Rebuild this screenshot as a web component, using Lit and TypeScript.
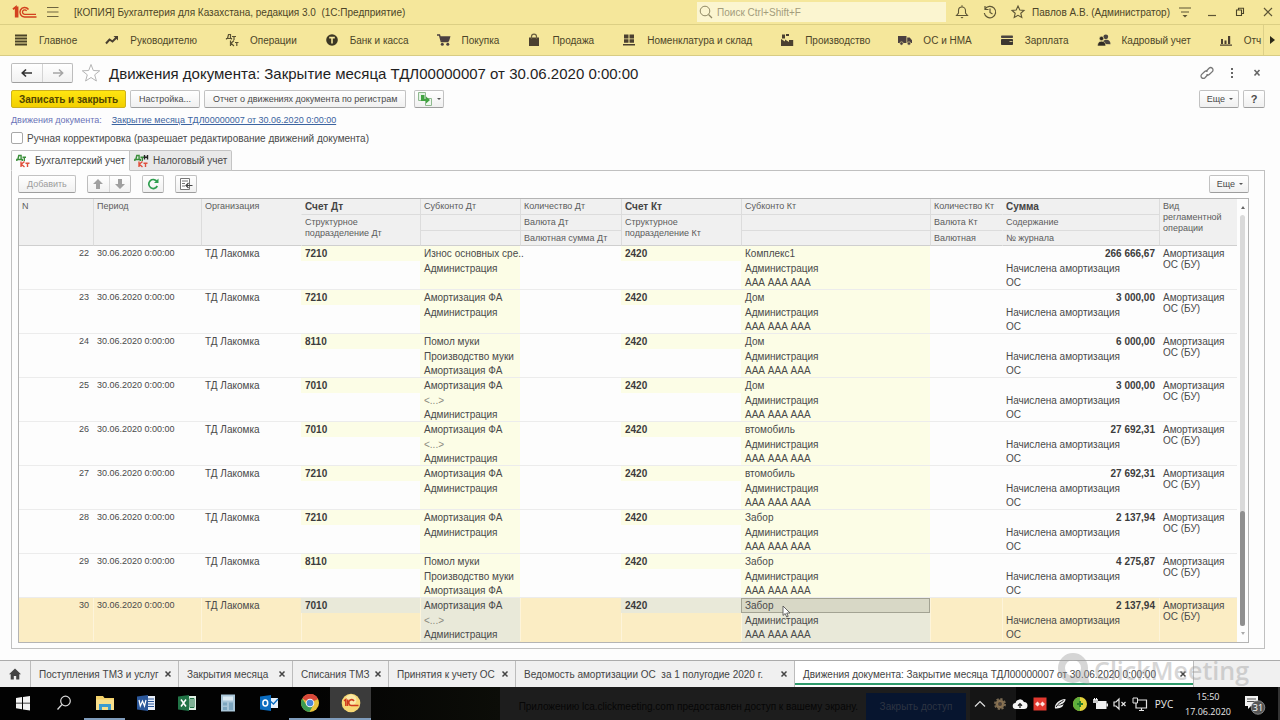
import { LitElement, html, svg, css, nothing } from "lit";
import { customElement, property } from "lit/decorators.js";
import { classMap } from "lit/directives/class-map.js";

interface Entry {
  n: number;
  debit: string;
  debitSub: [string, string, string];
  creditSub: string;
  sum: string;
}

const ADM = "Администрация";
const FA = "Амортизация ФА";

const entries: Entry[] = [
  { n: 22, debit: "7210", debitSub: ["Износ основных сре..", ADM, ""], creditSub: "Комплекс1", sum: "266 666,67" },
  { n: 23, debit: "7210", debitSub: [FA, ADM, ""], creditSub: "Дом", sum: "3 000,00" },
  { n: 24, debit: "8110", debitSub: ["Помол муки", "Производство муки", FA], creditSub: "Дом", sum: "6 000,00" },
  { n: 25, debit: "7010", debitSub: [FA, "<...>", ADM], creditSub: "Дом", sum: "3 000,00" },
  { n: 26, debit: "7010", debitSub: [FA, "<...>", ADM], creditSub: "втомобиль", sum: "27 692,31" },
  { n: 27, debit: "7210", debitSub: [FA, ADM, ""], creditSub: "втомобиль", sum: "27 692,31" },
  { n: 28, debit: "7210", debitSub: [FA, ADM, ""], creditSub: "Забор", sum: "2 137,94" },
  { n: 29, debit: "8110", debitSub: ["Помол муки", "Производство муки", FA], creditSub: "Забор", sum: "4 275,87" },
  { n: 30, debit: "7010", debitSub: [FA, "<...>", ADM], creditSub: "Забор", sum: "2 137,94" },
];

const glyphs: Record<string, unknown> = {
  main: svg`<path d="M1 2.500h12M1 5.500h12M1 8.500h12M1 11.500h12" stroke="#4a4326" stroke-width="1.800"/>`,
  trend: svg`<path d="M1 10.500 4.500 6.500 7.500 8.500 11.500 4.500" fill="none" stroke="#4a4030" stroke-width="2"/><path d="M8.500 3H13v4.500z" fill="#4a4030"/>`,
  ops: svg`<g fill="none" stroke="#5a5232" stroke-width="1.200"><path d="M1.500 6.500V5.500h5v1M2.500 5.500 3.500 1.500h2v4M7 3.500h4M9 3.500v3.500"/><path d="M5.500 7.500v5.500M9 7.500 6 10.300 9 13M10 9.500h3.500M11.800 9.500V13"/></g>`,
  bank: svg`<circle cx="7" cy="7" r="5.800" fill="#3c3724"/><path d="M4.200 4.600h5.600M7 4.600V10.500" stroke="#f5e79b" stroke-width="1.600"/>`,
  cart: svg`<path d="M0 2h2.500l1.800 6.500h7.200" fill="none" stroke="#4b4040" stroke-width="1.400"/><path d="M3 3.200h10.500L12 8.200H4.500z" fill="#4b4040"/><circle cx="5.300" cy="11.300" r="1.500" fill="#4b4040"/><circle cx="10.800" cy="11.300" r="1.500" fill="#4b4040"/>`,
  bag: svg`<path d="M2 4.500h10V13H2z" fill="#4b4030"/><path d="M4.500 6V3.500a2.500 2.300 0 0 1 5 0V6" fill="none" stroke="#6b6040" stroke-width="1.200"/>`,
  stock: svg`<path d="M2 1.500h4.500v4H2zM7.500 1.500H12v4H7.500zM2 6.300h4.500v3.500H2zM7.500 6.300H12v3.500H7.500zM1 11h12v1.500H1z" fill="#4b4030"/>`,
  factory: svg`<path d="M1 13V6l4 2.500V6.500l4 2.500V7h4.200v6zM2 1.500h3v4H2zM6 1h3v2H6z" fill="#4b4030"/>`,
  truck: svg`<path d="M0 3h8.500v7H0zM9.200 4.500h2.500L14 7.200V10H9.200z" fill="#4b4040"/><circle cx="3.500" cy="10.500" r="1.700" fill="#4b4040" stroke="#f5e79b" stroke-width=".6"/><circle cx="11" cy="10.500" r="1.700" fill="#4b4040" stroke="#f5e79b" stroke-width=".6"/>`,
  card: svg`<rect x="1" y="2.500" width="12" height="2.500" rx=".8" fill="#4b4540"/><rect x="1" y="6" width="12" height="6" rx=".8" fill="#3c3730"/><path d="M9.500 8.500h3" stroke="#c9bd84" stroke-width="1"/>`,
  people: svg`<circle cx="8.800" cy="3.800" r="2.400" fill="#4b4540"/><path d="M5.500 11c0-3 1.500-4.300 4-4.300s4 1.600 4 4.600z" fill="#4b4540"/><circle cx="4.500" cy="5.500" r="2.200" fill="#2f2a24" stroke="#f5e79b" stroke-width=".6"/><path d="M.5 13c0-3.300 1.500-4.800 4-4.800s4.300 1.500 4.300 4.800z" fill="#2f2a24" stroke="#f5e79b" stroke-width=".6"/>`,
  chart: svg`<path d="M2 6h2v5H2zM5.500 7.500h2V11h-2zM9 3h2.200v8H9zM1 11.500h12v1.200H1z" fill="#4b4030"/>`,
};

const sections: [string, string][] = [
  ["main", "Главное"],
  ["trend", "Руководителю"],
  ["ops", "Операции"],
  ["bank", "Банк и касса"],
  ["cart", "Покупка"],
  ["bag", "Продажа"],
  ["stock", "Номенклатура и склад"],
  ["factory", "Производство"],
  ["truck", "ОС и НМА"],
  ["card", "Зарплата"],
  ["people", "Кадровый учет"],
  ["chart", "Отч"],
];

const windows = [
  "Поступления ТМЗ и услуг",
  "Закрытия месяца",
  "Списания ТМЗ",
  "Принятия к учету ОС",
  "Ведомость амортизации ОС\u00a0 за 1 полугодие 2020 г.",
  "Движения документа: Закрытие месяца ТДЛ00000007 от 30.06.2020 0:00:00",
];

const icon = (size: number, body: unknown) =>
  html`<svg width=${size} height=${size} viewBox="0 0 ${size} ${size}" aria-hidden="true">${body}</svg>`;

@customElement("app-header")
class AppHeader extends LitElement {
  static styles = css`
    :host { display: block; background: #f5e79b; color: #4c4528; }
    svg { display: block; flex: none; }
    button { font: inherit; color: inherit; background: none; border: 0; padding: 0; display: flex; align-items: center; }
    .title { display: flex; align-items: center; height: 24px; border-bottom: 1px solid #dccf84; padding: 0 4px 0 12px; }
    .menu { margin: 0 14px 0 9px; }
    .name { flex: 1; white-space: pre; }
    .search { display: flex; align-items: center; width: 249px; height: 20px; background: #fbf5d0; gap: 4px; padding: 0 2px; box-sizing: border-box; margin-right: 8px; }
    .search input { flex: 1; min-width: 0; border: 0; background: none; font: inherit; padding: 0; outline: 0; }
    .search input::placeholder { color: #a39c7c; opacity: 1; }
    .tools { display: flex; align-items: center; gap: 12px; }
    .tools .user { margin: 0 -4px 0 -6px; }
    .nav { display: flex; height: 30px; border-bottom: 1px solid #d8cc84; }
    .list { display: flex; flex: 1; min-width: 0; overflow: hidden; padding-left: 14px; gap: 28px; }
    .item { flex: none; gap: 11px; white-space: nowrap; }
    .more { flex: none; width: 17px; border-left: 1px solid #ddd088; padding-left: 5px; }
  `;
  render() {
    return html`
      <div class="title">
        ${html`<svg width="25" height="14" viewBox="0 0 25 14" aria-label="1C"><g fill="none" stroke="#d2421f"><path d="M1 4.200 3.800 2v10.500M5.500 1.500v11" stroke-width="1.900"/><path d="M16.500 4.500A4.700 4.700 0 1 0 12.500 11.900H24.500" stroke-width="1.500"/><path d="M14.600 6a2.200 2.200 0 1 0-2 3.300H24" stroke-width="1.300"/></g></svg>`}
        <button class="menu" aria-label="Меню">${icon(14, svg`<path d="M1 2.500h11.500M1 7h11.500M1 11.500h11.500" stroke="#6e6540" stroke-width="1.100"/>`)}</button>
        <span class="name">[КОПИЯ] Бухгалтерия для Казахстана, редакция 3.0  (1С:Предприятие)</span>
        <label class="search">
          ${icon(14, svg`<circle cx="6" cy="6" r="4.800" fill="none" stroke="#8f8864"/><path d="m9.500 9.500 3.500 3.500" stroke="#8f8864" stroke-width="1.300"/>`)}
          <input placeholder="Поиск Ctrl+Shift+F" aria-label="Поиск" />
        </label>
        <div class="tools">
          <button aria-label="Уведомления">${icon(16, svg`<path d="M2.500 11.500h11L11.500 9V6.500a3.500 3.500 0 0 0-7 0V9zM8 1.200V3" fill="none" stroke="#5d5535" stroke-width="1.100"/><path d="M6.500 13h3L8 14.500z" fill="#5d5535"/>`)}</button>
          <button aria-label="История">${icon(16, svg`<path d="M3 5.200A5.700 5.700 0 1 1 2.300 9M3 2v3.500h3.500M8 4.500V8.500l2.500 1.500" fill="none" stroke="#5d5535" stroke-width="1.200"/>`)}</button>
          <button aria-label="Избранное">${icon(16, svg`<path d="m8 2 1.800 4 4.200.4-3.200 2.900 1 4.200L8 11.300l-3.800 2.200 1-4.200L2 6.400 6.200 6z" fill="none" stroke="#5d5535" stroke-width="1.100"/>`)}</button>
          <span class="user">Павлов А.В. (Администратор)</span>
          <button aria-label="Сервис">${icon(14, svg`<path d="M1 3h12M3 7h8" stroke="#5d5535" stroke-width="1.100"/><path d="M4.500 10h5L7 12.500z" fill="#5d5535"/>`)}</button>
          <button aria-label="Свернуть">${icon(16, svg`<path d="M4 11.500h8" stroke="#5d5535" stroke-width="1.200"/>`)}</button>
          <button aria-label="Развернуть">${icon(16, svg`<path d="M4.500 6h5v5.500h-5zM6.500 6V4.200h5v5.300H9.800" fill="none" stroke="#4b4428" stroke-width="1.100"/>`)}</button>
          <button aria-label="Закрыть">${icon(16, svg`<path d="m4 4 8 8M12 4l-8 8" stroke="#5d5535" stroke-width="1.200"/>`)}</button>
        </div>
      </div>
      <nav class="nav">
        <div class="list">
          ${sections.map(([g, label]) => html`<button class="item">${icon(14, glyphs[g])}${label}</button>`)}
        </div>
        <button class="more" aria-label="Дальше">${icon(8, svg`<path d="M1 0v8l5-4z" fill="#2c2818"/>`)}</button>
      </nav>
    `;
  }
}

@customElement("entries-table")
class EntriesTable extends LitElement {
  @property({ attribute: false }) rows: Entry[] = [];
  static styles = css`
    :host { display: flex; border: 1px solid #b4b4b4; background: #fdfdfd; min-height: 0; overflow: hidden; }
    .view { flex: 1; min-width: 0; }
    table { width: 100%; border-collapse: separate; border-spacing: 0; table-layout: fixed; color: #4a4a4a; }
    th, td { padding: 0; text-align: left; vertical-align: top; font-weight: 400; white-space: nowrap; }
    th { background: #f0f0f0; padding: 2px 0 0 3px; font-size: 9px; line-height: 11px; border-left: 1px solid #dcdcdc; box-sizing: border-box; color: #5c5c5c; border-bottom: 1px solid #dcdcdc; }
    th.first { border-left: 0; }
    th.flat { border-left-color: transparent; }
    th.key { font-weight: 700; font-size: 10px; color: #444; }
    tr.h { height: 16px; }
    tr.h3 { height: 15px; }
    tr.h .low, tr.h3 th { border-bottom-color: #cfcfcf; }
    td { border-bottom: 1px solid #ececec; height: 43px; }
    .line { display: block; box-sizing: border-box; height: 15px; line-height: 15px; padding: 0 4px; }
    .line.last { height: 13px; line-height: 13px; }
    .tint, .account .line { background: #fcfde6; }
    .num { text-align: right; }
    .small { font-size: 9px; }
    .strong { font-weight: 700; color: #3c3c3c; }
    .kind .line { line-height: 11px; height: 33px; padding-top: 2px; }
    .muted { color: #8b8b80; }
    .current td { background: #fbedc4; border-color: #fbedc4; }
    .current td + td { box-shadow: inset 1px 0 #fdf4da; }
    .current td.tint, .current .account .line { background: #e9e9d9; }
    .current td.tint { border-color: #e9e9d9; }
    .current .line.active { background: #d8d8c6; box-shadow: inset 0 0 0 1px #a3a393; }
    .anchor { position: relative; }
    .pointer { position: absolute; left: 41px; top: 7px; z-index: 2; }
    .bar { flex: none; width: 11px; display: flex; flex-direction: column; align-items: center; padding: 7px 0; box-sizing: border-box; gap: 6px; }
    .arrow { border: 2px solid transparent; border-top: 0; border-bottom: 3px solid #666; }
    .arrow.down { border-top: 3px solid #aaa; border-bottom: 0; }
    .track { flex: 1; width: 5px; border-radius: 3px; background: #dadada; display: flex; flex-direction: column; justify-content: flex-end; }
    .thumb { height: 28%; border-radius: 3px; background: #8f8f8f; }
    .c-n { width: 74px; } .c-date { width: 108px; } .c-org { width: 100px; } .c-acc { width: 119px; }
    .c-sub { width: 100px; } .c-qty { width: 101px; } .c-acc2 { width: 120px; } .c-sub2 { width: 189px; }
    .c-qty2 { width: 72px; } .c-sum { width: 157px; } .c-kind { width: 78px; }
  `;
  private lines(parts: string[], last = -1) {
    return parts.map(
      (p, i) => html`<span class=${classMap({ line: true, last: i === 2, muted: p === "<...>", active: i === last })}>${p}</span>`
    );
  }
  render() {
    const cols = ["n", "date", "org", "acc", "sub", "qty", "acc2", "sub2", "qty2", "sum", "kind"];
    return html`
      <div class="view">
      <table>
        <colgroup>${cols.map((c) => html`<col class="c-${c}" />`)}</colgroup>
        <thead>
          <tr class="h">
            <th class="first low" rowspan="3">N</th>
            <th class="low" rowspan="3">Период</th>
            <th class="low" rowspan="3">Организация</th>
            <th class="flat key">Счет Дт</th>
            <th>Субконто Дт</th>
            <th>Количество Дт</th>
            <th class="key">Счет Кт</th>
            <th>Субконто Кт</th>
            <th>Количество Кт</th>
            <th class="flat key">Сумма</th>
            <th class="low" rowspan="3">Вид<br />регламентной<br />операции</th>
          </tr>
          <tr class="h">
            <th class="flat low" rowspan="2">Структурное<br />подразделение Дт</th>
            <th></th>
            <th>Валюта Дт</th>
            <th class="low" rowspan="2">Структурное<br />подразделение Кт</th>
            <th></th>
            <th>Валюта Кт</th>
            <th class="flat">Содержание</th>
          </tr>
          <tr class="h3">
            <th></th>
            <th>Валютная сумма Дт</th>
            <th></th>
            <th>Валютная</th>
            <th class="flat">№ журнала</th>
          </tr>
        </thead>
        <tbody>
          ${this.rows.map((r) => {
            const current = r.n === 30;
            return html`<tr class=${classMap({ current })}>
              <td class="num small"><span class="line">${r.n}</span></td>
              <td class="small"><span class="line">30.06.2020 0:00:00</span></td>
              <td><span class="line">ТД Лакомка</span></td>
              <td class="account strong"><span class="line">${r.debit}</span></td>
              <td class="tint">${this.lines(r.debitSub)}</td>
              <td></td>
              <td class="account strong"><span class="line">2420</span></td>
              <td class="tint anchor">
                ${this.lines([r.creditSub, ADM, "ААА ААА ААА"], current ? 0 : -1)}
                ${current
                  ? html`<svg class="pointer" width="9" height="13" viewBox="0 0 9 13" aria-hidden="true"><path d="M1 1v9.500l2.200-2 1.500 3.500 1.500-.7-1.500-3.300H8z" fill="#fff" stroke="#555" stroke-width=".9"/></svg>`
                  : nothing}
              </td>
              <td></td>
              <td>
                <span class="line num strong">${r.sum}</span>
                <span class="line">Начислена амортизация</span>
                <span class="line last">ОС</span>
              </td>
              <td class="kind"><span class="line">Амортизация<br />ОС (БУ)</span></td>
            </tr>`;
          })}
        </tbody>
      </table>
      </div>
      <div class="bar"><i class="arrow"></i><div class="track"><div class="thumb"></div></div><i class="arrow down"></i></div>
    `;
  }
}

@customElement("task-bar")
class TaskBar extends LitElement {
  static styles = css`
    :host { display: flex; height: 34px; background: #040404; color: #e8e8e8; overflow: hidden; font-family: "Open Sans", "Noto Sans", sans-serif; }
    button { font: inherit; color: inherit; background: none; border: 0; padding: 0; }
    svg { display: block; }
    .apps { display: flex; padding-left: 2px; flex: none; width: 498px; background: linear-gradient(90deg, #020202 60%, #0c0d08); }
    .app { flex: none; width: 41px; display: flex; align-items: center; justify-content: center; border-bottom: 3px solid transparent; padding-top: 1px; box-sizing: border-box; }
    .run { border-bottom-color: #7f9cbc; }
    .on { background: #3b3b3b; }
    .share { flex: 1; display: flex; align-items: center; justify-content: flex-end; gap: 8px; background: #1d1d1d; color: #060606; min-width: 0; padding: 4px 4px 0 0; box-sizing: border-box; font-family: "Liberation Sans", Arial, sans-serif; white-space: nowrap; }
    .stop { height: 27px; width: 100px; background: #07152f; color: #2d3442; }
    .tray { display: flex; flex: none; align-items: center; background: linear-gradient(90deg, #151515 46px, #040404 46px); }
    .tray > button { width: 20px; display: flex; justify-content: center; align-items: center; height: 34px; }
    .tray > .lang { width: 28px; }
    .tray > .clock { width: 60px; display: block; text-align: center; line-height: 15px; font-size: 9px; }
    .tray > .note { width: 34px; margin-right: 6px; }
    .end { width: 2px; height: 34px; background: #333; }
  `;
  render() {
    const app = (cls: string, name: string, body: unknown) =>
      html`<button class="app ${cls}" aria-label=${name}>${icon(20, body)}</button>`;
    const tray = (name: string, body: unknown) => html`<button aria-label=${name}>${icon(16, body)}</button>`;
    return html`
      <div class="apps">
        ${app("", "Пуск", svg`<path d="m3 5 6-1v5.700H3zM10 3.900 17 3v6.700h-7zM3 10.500h6v5.800l-6-1zM10 10.500h7V17.500l-7-1z" fill="#f2f2f2"/>`)}
        ${app("", "Поиск", svg`<circle cx="11.500" cy="8" r="4.800" fill="none" stroke="#d8d8d8" stroke-width="1.200"/><path d="m8 11.500-4.500 5" stroke="#d8d8d8" stroke-width="1.300"/>`)}
        ${app("run", "Проводник", svg`<path d="M1 3h7l1.500 2H19v12H1z" fill="#f3d16a"/><path d="M1 6.500h18V17H1z" fill="#f8df8c"/><path d="M4 17v-6h12v6h-3v-3H7v3z" fill="#3c9bd0"/>`)}
        ${app("", "Word", svg`<path d="M10 3h9v14h-9z" fill="#e8eef8"/><path d="M11 6h7M11 8.500h7M11 11h7M11 13.500h7" stroke="#2b579a"/><path d="M1 3.500 12 2v16L1 16.500z" fill="#2b579a"/><path d="m3 7 1.300 6L6.500 8l2 5L10 7" fill="none" stroke="#fff" stroke-width="1.200"/>`)}
        ${app("", "Excel", svg`<path d="M10 3h9v14h-9z" fill="#dff0e4"/><path d="M13 5.500h4v9h-4zM15 5v10" fill="none" stroke="#217346"/><path d="M1 3.500 12 2v16L1 16.500z" fill="#217346"/><path d="m4 6.500 5 7M9 6.500l-5 7" stroke="#fff" stroke-width="1.500"/>`)}
        ${app("", "Калькулятор", svg`<path d="M3 1.500h14v17H3z" fill="#a9c6d8"/><path d="M5 3.500h10v4H5z" fill="#dcebf3"/><path d="M5 9.500h4v3H5zM5 14h4v3H5zM11 9.500h4V17h-4z" fill="#7da6bf"/>`)}
        ${app("", "Outlook", svg`<path d="M10 5h9v10h-9z" fill="#e6f0fa"/><path d="m10 7 4.500 4L19 6" fill="none" stroke="#0a6cc0" stroke-width="1.300"/><path d="M1 3.500 12 2v16L1 16.500z" fill="#0a6cc0"/><ellipse cx="6.300" cy="10" rx="2.400" ry="3" fill="none" stroke="#fff" stroke-width="1.500"/>`)}
        ${app("run", "Chrome", svg`<circle cx="10" cy="10" r="9" fill="#e8c23a"/><path d="M10 10 2.200 5.500A9 9 0 0 1 18 6z" fill="#d9493a"/><path d="M10 1a9 9 0 0 1 8 5h-8z" fill="#d9493a"/><path d="M2.200 5.500A9 9 0 0 0 9.500 19L13 12.500 6.500 12z" fill="#3b9a52"/><circle cx="10" cy="10" r="4.300" fill="#f4f4f4"/><circle cx="10" cy="10" r="3.300" fill="#4a86d8"/>`)}
        ${app("run on", "1С:Предприятие", svg`<circle cx="10" cy="10" r="9.300" fill="#f7d774"/><circle cx="10" cy="7" r="5.500" fill="#fbe9a8"/><g fill="none" stroke="#cf3a1d"><path d="m3 7.800 1.800-1.300V13M6.600 6.500V13" stroke-width="1.500"/><path d="M13 8A2.900 2.900 0 1 0 11 12.500h6.500" stroke-width="1.600"/></g>`)}
      </div>
      <div class="share">
        <span>Приложению lca.clickmeeting.com предоставлен доступ к вашему экрану.</span>
        <button class="stop">Закрыть доступ</button>
      </div>
      <div class="tray">
        ${tray("Скрытые значки", svg`<path d="m3 10.500 5-5 5 5" fill="none" stroke="#ddd" stroke-width="1.200"/>`)}
        ${tray("Настройки", svg`<circle cx="8" cy="8" r="4.500" fill="#8c7350" stroke="#7a6a52" stroke-width="3" stroke-dasharray="2 1.500"/><circle cx="8" cy="8" r="2" fill="#4a4038"/>`)}
        ${tray("Облако", svg`<path d="M4 13a3 3 0 0 1-.5-6 4.500 4.500 0 0 1 8.500-1A3.500 3.500 0 0 1 12 13z" fill="#f5f5f5"/><path d="M8 12V8M6 9.700l2-2 2 2" fill="none" stroke="#222" stroke-width="1.300"/>`)}
        ${tray("AnyDesk", svg`<path d="M1.500 1.500h13v13h-13z" fill="#e2382f"/><path d="m5.500 5.500 2.500 2.500-2.500 2.500L3 8zM10.500 5.500 13 8l-2.500 2.500L8 8z" fill="#fbe3e0"/>`)}
        ${tray("Планшет", svg`<path d="M3 12.500C2 8 7 3.500 13.500 3c0 4-4 5.500-8 6.500 3 0 5-.5 6-1.500-.5 3.500-3.500 4.500-8.500 4.500z" fill="#ececec"/><path d="M4 11c2-3.500 5-5 7.500-6.500" fill="none" stroke="#111"/>`)}
        ${tray("Антивирус", svg`<circle cx="8" cy="8" r="7" fill="#e3d33c"/><path d="M8 1a7 7 0 0 0 0 14z" fill="#5fae3c"/><path d="M8 5v6M5 8h6" stroke="#277d2c" stroke-width="2"/>`)}
        ${tray("Батарея", svg`<path d="M4 5h10.500v8H4z" fill="#f0f0f0"/><path d="M14.500 7.500H16v3h-1.500z" fill="#eee"/><path d="M1 3h5v4H1z" fill="#c8c8c8"/><path d="M2.500 2v2M4.500 2v2" stroke="#fff"/>`)}
        ${tray("Звук", svg`<path d="M2 6h2l3-3v10L4 10H2z" fill="none" stroke="#e4e4e4" stroke-width="1.200"/><path d="m9.500 6 4 4M13.500 6l-4 4" stroke="#e4e4e4" stroke-width="1.200"/>`)}
        ${tray("Сеть", svg`<path d="M4 4h10.500v8H4zM7 14.500h5M9.500 12v2.500" fill="none" stroke="#e4e4e4" stroke-width="1.200"/><path d="M1 2h4.500v5H1z" fill="#0a0a0a" stroke="#e4e4e4"/>`)}
        <button class="lang">РУС</button>
        <button class="clock">15:50<br />17.06.2020</button>
        <button class="note" aria-label="Уведомления: 31">
          <svg width="22" height="22" viewBox="0 0 22 22"><path d="M1 3h13v10H7l-3 3v-3H1z" fill="#f2f2f2"/><path d="M3 6h9M3 8.500h9" stroke="#555"/><circle cx="14" cy="14.500" r="6.800" fill="#555" stroke="#bbb" stroke-width=".6"/><text x="14" y="17.500" text-anchor="middle" font-size="9" fill="#fff">31</text></svg>
        </button>
        <i class="end"></i>
      </div>
    `;
  }
}

@customElement("app-root")
class AppRoot extends LitElement {
  static styles = css`
    :host { display: flex; flex-direction: column; min-height: 100vh; background: #fdfdfd; font-family: "Liberation Sans", Arial, sans-serif; font-size: 10px; color: #4a4a4a; position: relative; overflow: hidden; }
    svg { display: block; flex: none; }
    button { font: inherit; color: inherit; margin: 0; padding: 0; display: flex; align-items: center; justify-content: center; box-sizing: border-box; background: none; border: 0; white-space: nowrap; }
    h1 { font-size: 15px; font-weight: 400; color: #1f1f1f; margin: 0; flex: 1; }
    .form { flex: 1; display: flex; flex-direction: column; padding: 6px 15px 11px 11px; }
    .row { display: flex; align-items: center; }
    .head { height: 22px; gap: 8px; }
    .pair { display: flex; border: 1px solid #bdbdbd; border-bottom-color: #9f9f9f; border-radius: 2px; background: linear-gradient(#fff, #f1f1f1); }
    .pair button { width: 30px; height: 18px; }
    .pair button + button { border-left: 1px solid #d4d4d4; }
    .icons { display: flex; gap: 9px; }
    .cmds { margin-top: 6px; gap: 4px; height: 18px; }
    .btn { height: 18px; border: 1px solid #c2c2c2; border-bottom-color: #9d9d9d; border-radius: 2px; background: linear-gradient(#fff, #f0f0f0); padding: 0 8px; gap: 4px; font-size: 9px; }
    .primary { background: linear-gradient(#ffe511, #f2cf00); border-color: #cdb11c; color: #514500; font-weight: 700; font-size: 10px; padding: 0 7px; }
    .make { padding: 0 2px; margin-left: 4px; }
    .caret { border: 2px solid transparent; border-top: 2px solid #555; border-bottom: 0; }
    .push { margin-left: auto; padding: 0 5px 0 7px; }
    .help { width: 22px; font-weight: 700; font-size: 11px; padding: 0; }
    .links { height: 18px; margin-top: 3px; color: #6a73b8; gap: 10px; font-size: 9px; }
    .links a { color: #3c64a0; text-decoration: underline; }
    .check { height: 18px; gap: 4px; }
    .check input { appearance: none; width: 12px; height: 12px; margin: 0; border: 1px solid #a8a8a8; border-radius: 2px; background: #fff; }
    .tabs { display: flex; margin-top: 3px; position: relative; z-index: 1; height: 21px; }
    .tabs button { gap: 4px; padding: 0 4px; border: 1px solid #c4c4c4; border-left: 0; background: #e9e9e9; height: 21px; border-radius: 0 2px 0 0; }
    .tabs .open { background: #fdfdfd; border-left: 1px solid #c4c4c4; border-bottom-color: #fdfdfd; border-radius: 2px 0 0 0; }
    .panel { margin-top: -1px; flex: 1; display: flex; flex-direction: column; border: 1px solid #c0c0c0; padding: 4px 15px 5px 6px; min-height: 0; }
    .bar { height: 18px; gap: 11px; margin-bottom: 5px; }
    .bar .pair button { width: 21px; height: 16px; }
    .bar .sq { width: 22px; padding: 0; }
    .bar .off { color: #9c9c9c; }
    entries-table { flex: 1; }
    .wins { display: grid; grid-template-columns: 31px 148px 114px 96px 127px 279px 399px 1fr; height: 27px; border-top: 1px solid #ababab; background: #f0f0f0; box-sizing: border-box; color: #444; }
    .wins > * { border-right: 1px solid #bcbcbc; min-width: 0; }
    .wins > .rest { border: 0; }
    .win { justify-content: space-between; padding: 0 6px 0 8px; }
    .wins .now { background: #fff; box-shadow: inset 0 -2px #fff, inset 0 -4px #2f9b6c; }
    .mark { position: absolute; right: 31px; bottom: 33px; display: flex; align-items: center; gap: 3px; color: #9a9a9a; opacity: .4; font: 600 25px "Open Sans", "Noto Sans", sans-serif; pointer-events: none; line-height: 36px; z-index: 3; }
  `;
  render() {
    const caret = html`<i class="caret"></i>`;
    const dk = (n: boolean) => html`<svg width="15" height="14" viewBox="0 0 15 14" aria-hidden="true"><g fill="none" stroke-width="1.400"><path d="M.8 7V5.500h5.500V7M1.800 5.500 2.800 1.500h2.300v4M6.500 3.300h3.500M8.300 3.300V7" stroke="#3b8f3b"/><path d="M5 7.500V13M8.500 7.500 5.300 10.300 8.500 13M9.500 9.300h4M11.500 9.300V13" stroke="#e0503c"/>${n ? svg`<path d="M10.500 1v4.500M13.500 1v4.500M10.500 3.200h3" stroke="#222"/>` : nothing}</g></svg>`;
    return html`
      <app-header></app-header>
      <main class="form">
        <div class="row head">
          <div class="pair">
            <button aria-label="Назад">${icon(14, svg`<path d="M2 7h10M6 3.500 2.300 7 6 10.500" fill="none" stroke="#333" stroke-width="1.700"/>`)}</button>
            <button aria-label="Вперед">${icon(14, svg`<path d="M2 7h10M8 3.500 11.700 7 8 10.500" fill="none" stroke="#a5a5a5" stroke-width="1.500"/>`)}</button>
          </div>
          ${icon(20, svg`<path d="m10 1.500 2.300 6 6.400.300-5 4 1.700 6.200L10 14.500 4.600 18l1.700-6.200-5-4 6.400-.300z" fill="#fff" stroke="#b5b5b5"/>`)}
          <h1>Движения документа: Закрытие месяца ТДЛ00000007 от 30.06.2020 0:00:00</h1>
          <div class="icons">
            <button aria-label="Ссылка">${icon(16, svg`<g fill="none" stroke="#777" stroke-width="1.300"><path d="M7 6.500 10 3.300a2.300 2.300 0 0 1 3.300 3.300L10.500 9.300a2.300 2.300 0 0 1-3 .2"/><path d="M9 9.500 6 12.700a2.300 2.300 0 0 1-3.300-3.300L5.500 6.700a2.300 2.300 0 0 1 3-.2"/></g>`)}</button>
            <button aria-label="Действия">${icon(16, svg`<path d="M8 3v2M8 7v2M8 11v2" stroke="#666" stroke-width="2"/>`)}</button>
            <button aria-label="Закрыть">${icon(16, svg`<path d="m5.500 5 5 5.500M10.500 5l-5 5.500" stroke="#666" stroke-width="1.600"/>`)}</button>
          </div>
        </div>
        <div class="row cmds">
          <button class="btn primary">Записать и закрыть</button>
          <button class="btn">Настройка...</button>
          <button class="btn">Отчет о движениях документа по регистрам</button>
          <button class="btn make" aria-label="Создать на основании">
            ${icon(16, svg`<path d="M1.500 1.500h7v8h-7z" fill="#e3f2e3" stroke="#8fb98f"/><path d="M8.500 7.500h6v7h-6z" fill="#eef7ee" stroke="#8fb98f"/><path d="M4 4v6h5v2.500L13 9 9 5.500V8H7.500V4z" fill="#41a341"/>`)}${caret}
          </button>
          <button class="btn push">Еще ${caret}</button>
          <button class="btn help">?</button>
        </div>
        <div class="row links">Движения документа: <a href="#doc">Закрытие месяца ТДЛ00000007 от 30.06.2020 0:00:00</a></div>
        <label class="row check"><input type="checkbox" />Ручная корректировка (разрешает редактирование движений документа)</label>
        <div class="tabs">
          <button class="open">${dk(false)}Бухгалтерский учет</button>
          <button>${dk(true)}Налоговый учет</button>
        </div>
        <section class="panel">
          <div class="row bar">
            <button class="btn off">Добавить</button>
            <div class="pair">
              <button aria-label="Вверх">${icon(12, svg`<path d="M6 1 11 6H8v5H4V6H1z" fill="#a0a0a0"/>`)}</button>
              <button aria-label="Вниз">${icon(12, svg`<path d="M6 11 1 6h3V1h4v5h3z" fill="#a0a0a0"/>`)}</button>
            </div>
            <button class="btn sq" aria-label="Обновить">${icon(14, svg`<path d="M11 4.500A4.500 4.500 0 1 0 11.300 9" fill="none" stroke="#2f9e4f" stroke-width="1.700"/><path d="M12.500 1.500V6H8z" fill="#2f9e4f"/>`)}</button>
            <button class="btn sq" aria-label="Вывести список">${icon(14, svg`<path d="M1.500 1.500h9v11h-9z" fill="#fff" stroke="#777"/><path d="M3 4h6M3 6.500h3M3 9h3" stroke="#777"/><path d="M13.500 8.500H7M9.500 6 7 8.500 9.500 11" fill="none" stroke="#444" stroke-width="1.200"/>`)}</button>
            <button class="btn push">Еще ${caret}</button>
          </div>
          <entries-table .rows=${entries}></entries-table>
        </section>
      </main>
      <nav class="wins">
        <button aria-label="Начальная страница">${icon(14, svg`<path d="M7 1.500 1 7.200h1.700V12.500h3.100V9h2.400v3.500h3.100V7.200H13z" fill="#444"/>`)}</button>
        ${windows.map(
          (w, i) => html`<button class=${classMap({ win: true, now: i === 5 })}><span>${w}</span>${icon(8, svg`<path d="m1.500 1.500 5 5M6.500 1.500l-5 5" stroke="#444" stroke-width="1.500"/>`)}</button>`
        )}
        <span class="rest"></span>
      </nav>
      <task-bar></task-bar>
      <div class="mark">
        <svg width="34" height="36" viewBox="0 0 34 36" aria-hidden="true"><circle cx="16" cy="16" r="11.500" fill="none" stroke="#9a9a9a" stroke-width="7"/><path d="m18 19 12 2 3 12-10-3z" fill="#9a9a9a"/></svg>
        <span>ClickMeeting</span>
      </div>
    `;
  }
}
